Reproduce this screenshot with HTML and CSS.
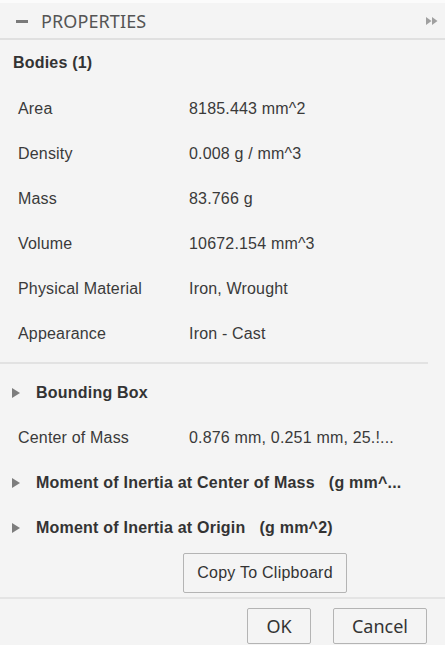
FILE: index.html
```html
<!DOCTYPE html>
<html>
<head>
<meta charset="utf-8">
<link rel="stylesheet" href="styles.css">
</head>
<body>
<div class="panel">
  <div class="header">
    <span class="minus"></span>
    <span class="title">PROPERTIES</span>
    <svg class="expand" width="12" height="8" viewBox="0 0 12 8"><path d="M0 0 L5.5 4 L0 8 Z M6 0 L11.5 4 L6 8 Z" fill="#a0a0a0"/></svg>
  </div>
  <div class="group-title">Bodies (1)</div>
  <div class="row"><span class="label">Area</span><span class="value">8185.443 mm^2</span></div>
  <div class="row"><span class="label">Density</span><span class="value">0.008 g / mm^3</span></div>
  <div class="row"><span class="label">Mass</span><span class="value">83.766 g</span></div>
  <div class="row"><span class="label">Volume</span><span class="value">10672.154 mm^3</span></div>
  <div class="row"><span class="label">Physical Material</span><span class="value">Iron, Wrought</span></div>
  <div class="row"><span class="label">Appearance</span><span class="value">Iron - Cast</span></div>
  <div class="separator"></div>
  <div class="row section"><span class="tri"></span><span class="section-label">Bounding Box</span></div>
  <div class="row"><span class="label">Center of Mass</span><span class="value">0.876 mm, 0.251 mm, 25.!...</span></div>
  <div class="row section"><span class="tri"></span><span class="section-label">Moment of Inertia at Center of Mass   (g mm^...</span></div>
  <div class="row section"><span class="tri"></span><span class="section-label">Moment of Inertia at Origin   (g mm^2)</span></div>
  <div class="copy-wrap"><button class="btn copy">Copy To Clipboard</button></div>
  <div class="footer">
    <button class="btn dlg ok">OK</button>
    <button class="btn dlg cancel">Cancel</button>
  </div>
</div>
</body>
</html>
```
FILE: styles.css
```css
html, body {
  margin: 0;
  padding: 0;
  background: #f4f4f4;
}
.panel {
  width: 445px;
  height: 645px;
  background: #f4f4f4;
  border-top: 3px solid #fbfbfb;
  box-sizing: border-box;
  font-family: "Liberation Sans", Arial, sans-serif;
  color: #3a3a3a;
  overflow: hidden;
}
.header {
  height: 35px;
  border-bottom: 2px solid #e0e0e0;
  display: flex;
  align-items: center;
  padding-left: 16px;
  padding-right: 7px;
}
.minus {
  width: 12px;
  height: 3px;
  background: #7a7a7a;
  margin-right: 13px;
  margin-top: 1px;
}
.title {
  font-family: "Noto Sans", "Open Sans", sans-serif;
  font-size: 18px;
  color: #555;
  letter-spacing: 0.1px;
  margin-top: 1px;
  flex: 1;
}
.expand {
  margin-top: 1px;
}
.group-title {
  height: 46px;
  display: flex;
  align-items: center;
  padding-left: 13px;
  font-weight: bold;
  font-size: 16px;
  letter-spacing: 0.2px;
  color: #333;
}
.row {
  height: 45px;
  display: flex;
  align-items: center;
  font-size: 16px;
  letter-spacing: 0.18px;
  white-space: pre;
}
.label {
  padding-left: 18px;
  width: 171px;
  flex: none;
}
.value {
  color: #3a3a3a;
}
.separator {
  height: 2px;
  width: 428px;
  background: #e2e2e2;
  margin: 6px 0 6px 0;
}
.section {
  padding-left: 12px;
}
.tri {
  width: 0;
  height: 0;
  border-top: 5.5px solid transparent;
  border-bottom: 5.5px solid transparent;
  border-left: 8px solid #7d7d7d;
  margin-right: 16px;
}
.section-label {
  font-weight: bold;
  color: #333;
  letter-spacing: 0.22px;
}
.copy-wrap {
  display: flex;
  padding-left: 183px;
  margin-top: 3px;
}
.btn {
  background: #f4f4f4;
  border: 1px solid #b4b4b4;
  border-radius: 2px;
  color: #333;
  padding: 0;
  margin: 0;
}
.copy {
  width: 164px;
  height: 40px;
  font-family: "Liberation Sans", Arial, sans-serif;
  font-size: 16px;
  letter-spacing: 0.25px;
}
.footer {
  margin-top: 4px;
  border-top: 2px solid #e4e4e4;
  display: flex;
  justify-content: flex-end;
  padding-right: 18px;
  padding-top: 9px;
  gap: 22px;
}
.dlg {
  height: 36px;
  font-family: "Noto Sans", "Open Sans", sans-serif;
  font-size: 18px;
}
.ok { width: 64px; }
.cancel { width: 94px; }
```
